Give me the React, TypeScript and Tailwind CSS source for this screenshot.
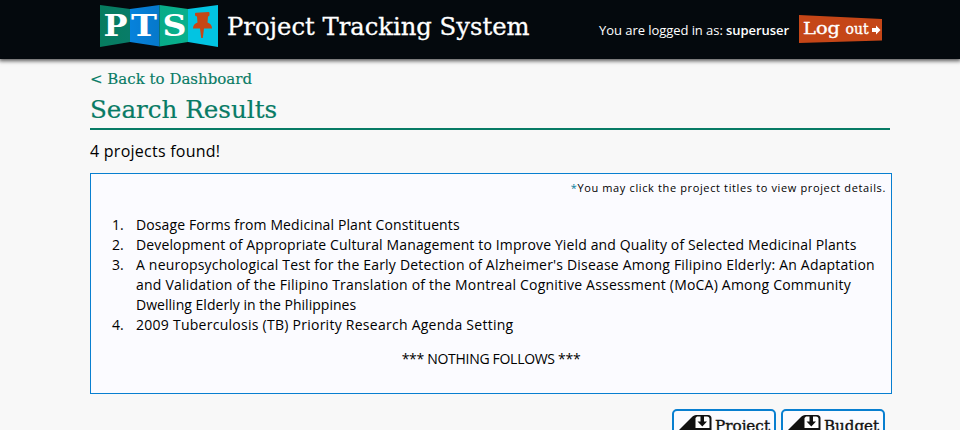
const slab = "font-['DejaVu_Serif',serif]";

function Logo() {
  return (
    <svg width="440" height="52" viewBox="0 0 440 52" className="block" fontFamily="'DejaVu Serif', serif">
      <defs>
        <linearGradient id="g1"><stop offset="0" stopColor="#067c5e" /><stop offset="1" stopColor="#087c68" /></linearGradient>
        <linearGradient id="g2"><stop offset="0" stopColor="#0682dc" /><stop offset="1" stopColor="#0678ca" /></linearGradient>
        <linearGradient id="g3"><stop offset="0" stopColor="#08ab88" /><stop offset="1" stopColor="#07b08d" /></linearGradient>
      </defs>
      <path d="M0 5L30 9V42L0 47z" fill="url(#g1)" />
      <path d="M30 9L59.5 5V46.5L30 42z" fill="url(#g2)" />
      <path d="M59.5 5L88 9V42L59.5 46.5z" fill="url(#g3)" />
      <path d="M88 9L118 5V47L88 42z" fill="#02c4e2" />
      <g fill="#fff" fontWeight="700" fontSize="30">
        <text x="3.5" y="36" textLength="24" lengthAdjust="spacingAndGlyphs">P</text>
        <text x="31" y="36" textLength="26" lengthAdjust="spacingAndGlyphs">T</text>
        <text x="62.5" y="36" textLength="24" lengthAdjust="spacingAndGlyphs">S</text>
      </g>
      <path d="M96 12.8L108.500 12Q109.500 12 109.500 13V15Q109.500 16 108 16.500L107.500 22.500Q112 24 112 28.500H104L102.800 38H101.200L100 28.500H93Q93 24 97.500 22.500L97 16.500Q95 16 95 15V13.800Q95 12.900 96 12.800z" fill="#c64616" />
      <text x="127" y="35" fontSize="24" fill="#fff" stroke="#fff" strokeWidth=".3" textLength="302.5" lengthAdjust="spacingAndGlyphs">Project Tracking System</text>
    </svg>
  );
}

function LogoutButton() {
  return (
    <svg width="83" height="30" viewBox="0 0 83 30" className="block" fontFamily="'DejaVu Serif', serif">
      <path d="M0 1L83 5V26.5L0 29z" fill="#c54617" />
      <g fill="#fff" stroke="#fff" strokeWidth=".35">
        <text x="4" y="20" fontSize="17" textLength="37" lengthAdjust="spacingAndGlyphs">Log</text>
        <text x="46.5" y="19.5" fontSize="14" textLength="23" lengthAdjust="spacingAndGlyphs">out</text>
      </g>
      <path d="M73 14H77V11.5L81.500 16L77 20.500V18H73z" fill="#fff" />
    </svg>
  );
}

function ExportButton({ label }: { label: string }) {
  return (
    <button className="block h-9 w-[104px] rounded-[5px] border-2 border-[#087fd0] bg-[#fbfbff]">
      <svg width="100" height="32" viewBox="0 0 100 32" className="block" fontFamily="'DejaVu Serif', serif">
        <path d="M4 20L18.500 5.500Q20 4 22 4H34Q37.500 4 37.500 7.500V20z" fill="#111" />
        <path d="M21.500 7L23 5.500H33Q35.500 5.500 35.500 8V17H21.500z" fill="#fff" />
        <path d="M26.500 5H30V10.500H33L28.300 15.500L23.500 10.500H26.500z" fill="#111" />
        <path d="M21 7V20H18V11z" fill="#111" />
        <text x="41" y="19.5" fontSize="14" fill="#111" stroke="#111" strokeWidth=".35" textLength="55" lengthAdjust="spacingAndGlyphs">{label}</text>
      </svg>
    </button>
  );
}

export default function App() {
  return (
    <div className="h-[430px] overflow-hidden bg-[#f8f8f8] font-['Open_Sans',sans-serif] text-black">
      <header className="h-[59px] bg-[#04090d] shadow-[0_1px_4px_1px_rgba(0,0,0,0.65)]">
        <div className="ml-[100px] flex w-[782px] justify-between">
          <Logo />
          <div className="flex pt-[14px] text-white">
            <p className="mr-[10px] whitespace-nowrap pt-[6px] text-[13px] leading-5 tracking-[-0.06px]">
              You are logged in as: <b className="font-semibold">superuser</b>
            </p>
            <LogoutButton />
          </div>
        </div>
      </header>
      <main className="ml-[90px] w-[802px]">
        <a className={`block pt-[10px] text-[15px] leading-5 text-[#087b65] [-webkit-text-stroke:0.15px_#087b65] ${slab}`}>&lt; Back to Dashboard</a>
        <h1 className={`h-[41px] w-[800px] border-b-2 border-[#087b65] pt-1 text-[24.6px] leading-[34px] text-[#087b65] [-webkit-text-stroke:0.2px_#087b65] ${slab}`}>Search Results</h1>
        <p className="h-[43px] pt-[11px] text-[16px] leading-5 tracking-[0.25px]">4 projects found!</p>
        <section className="h-[221px] border border-[#087fd0] bg-[#fbfbff] pt-1">
          <p className="pr-[5px] text-right text-[11px] leading-5 tracking-[0.63px]">
            <span className="text-[#087b9b]">*</span>You may click the project titles to view project details.
          </p>
          <ol className="mt-[17px] list-none whitespace-nowrap text-[14px] leading-5">
            <li className="flex"><span className="w-[45px] pl-[21px]">1.</span><span className="tracking-[0.12px]">Dosage Forms from Medicinal Plant Constituents</span></li>
            <li className="flex"><span className="w-[45px] pl-[21px]">2.</span><span className="tracking-[0.137px]">Development of Appropriate Cultural Management to Improve Yield and Quality of Selected Medicinal Plants</span></li>
            <li className="flex"><span className="w-[45px] pl-[21px]">3.</span><span>
              <span className="block tracking-[0.19px]">A neuropsychological Test for the Early Detection of Alzheimer's Disease Among Filipino Elderly: An Adaptation</span>
              <span className="block tracking-[0.21px]">and Validation of the Filipino Translation of the Montreal Cognitive Assessment (MoCA) Among Community</span>
              <span className="block tracking-[0.03px]">Dwelling Elderly in the Philippines</span></span></li>
            <li className="flex"><span className="w-[45px] pl-[21px]">4.</span><span className="tracking-[0.26px]">2009 Tuberculosis (TB) Priority Research Agenda Setting</span></li>
          </ol>
          <p className="mt-[14px] text-center text-[14px] leading-5 tracking-[-0.3px]">*** NOTHING FOLLOWS ***</p>
        </section>
        <div className="mt-[15px] flex justify-end gap-[5px] pr-[7px]">
          <ExportButton label="Project" />
          <ExportButton label="Budget" />
        </div>
      </main>
    </div>
  );
}
